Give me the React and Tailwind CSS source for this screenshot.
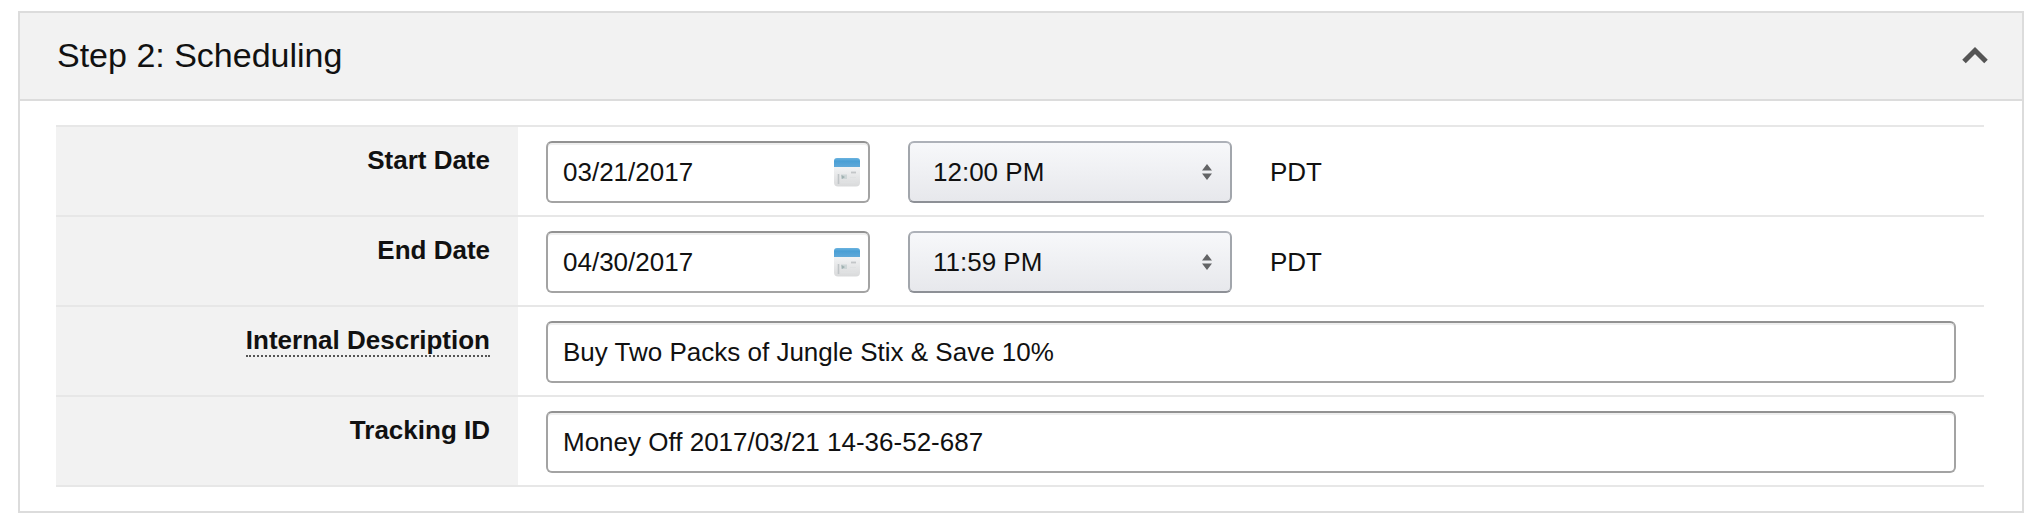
import { useState } from "react";

const TIMES = ["12:00 AM", "6:00 AM", "12:00 PM", "6:00 PM", "11:59 PM"];

const FIELD =
  "block h-[62px] w-full rounded-[6px] border-2 border-[#a3a3a3] border-t-[#929292] bg-white px-[15px] text-[26px] text-[#111] shadow-[inset_0_2px_0_#efefef] outline-none focus:border-[#e77600]";

function CalendarIcon() {
  return (
    <svg viewBox="0 0 26 29" className="h-[29px] w-[26px]" aria-hidden="true">
      <defs>
        <linearGradient id="calHead" x1="0" y1="0" x2="0" y2="1">
          <stop offset="0" stopColor="#6bb3df" />
          <stop offset="0.35" stopColor="#4a9fd5" />
          <stop offset="1" stopColor="#5fa9d9" />
        </linearGradient>
        <linearGradient id="calPage" x1="0" y1="0" x2="0" y2="1">
          <stop offset="0" stopColor="#f3f4f5" />
          <stop offset="1" stopColor="#d9dadb" />
        </linearGradient>
      </defs>
      <path d="M0 8H26V24.5a4 4 0 0 1-4 4H4a4 4 0 0 1-4-4Z" fill="url(#calPage)" />
      <path d="M0 3a3 3 0 0 1 3-3H23a3 3 0 0 1 3 3V9H0Z" fill="url(#calHead)" />
      <path d="M4.5 16V26" stroke="#bfc4c6" strokeWidth="1.6" />
      <path d="M7 16.5H13V21H7Z" fill="#cdd5d6" />
      <path d="M7.5 17L11 19L8 21Z" fill="#9fb0b0" />
      <path d="M17 14.5H22" stroke="#c3c6c8" strokeWidth="1.8" />
      <path d="M7 24.5H21M16 19.5H22" stroke="#dfe1e2" strokeWidth="1.2" />
    </svg>
  );
}

function Row({ id, label, hint, children }) {
  return (
    <div className="flex border-b-2 border-[#e7e7e7]">
      <div className="w-[462px] shrink-0 bg-[#f2f2f2] pt-3.5 pr-7 text-right">
        <label htmlFor={id} className="text-[26px] leading-[38px] font-bold">
          {hint ? (
            <span className="border-b-2 border-dotted border-[#555]">{label}</span>
          ) : (
            label
          )}
        </label>
      </div>
      <div className="flex min-w-0 grow items-center gap-[38px] px-7 pt-3.5 pb-3">{children}</div>
    </div>
  );
}

function DateTime({ id, name, date, time }) {
  return (
    <>
      <div className="relative w-[324px]">
        <input id={id} type="text" defaultValue={date} className={FIELD} />
        <button
          type="button"
          aria-label={`Choose ${name}`}
          className="absolute inset-y-0 right-2.5 flex items-center"
        >
          <CalendarIcon />
        </button>
      </div>
      <div className="relative w-[324px]">
        <select
          aria-label={`${name} time`}
          defaultValue={time}
          className="block h-[62px] w-full appearance-none rounded-[6px] border-2 border-[#a2a6ac] border-t-[#adb1b8] border-b-[#8d9096] bg-linear-to-b from-[#f7f8fa] to-[#e7e8ec] px-[23px] text-[26px] text-[#111] outline-none"
        >
          {TIMES.map((t) => (
            <option key={t}>{t}</option>
          ))}
        </select>
        <svg
          viewBox="0 0 10 16"
          className="pointer-events-none absolute top-[23px] right-5 h-4 w-2.5"
          aria-hidden="true"
        >
          <path d="M0 6.5L5 0L10 6.5ZM0 9.5H10L5 16Z" fill="#636466" />
        </svg>
      </div>
      <span className="text-[26px]">PDT</span>
    </>
  );
}

export default function App() {
  const [open, setOpen] = useState(true);
  return (
    <main className="bg-white pt-[11px] pr-3.5 pb-4 pl-[18px] font-['Liberation_Sans',Arial,sans-serif] text-[#111]">
      <section className="border-2 border-[#dcdcdc]">
        <header className="flex h-[88px] items-center justify-between border-b-2 border-[#dcdcdc] bg-[#f2f2f2] pr-[33px] pb-0.5 pl-[37px]">
          <h2 className="text-[34px]">Step 2: Scheduling</h2>
          <button
            type="button"
            aria-label="Toggle scheduling"
            aria-expanded={open}
            onClick={() => setOpen(!open)}
          >
            <svg viewBox="0 0 28 20" className="h-5 w-7" fill="none" aria-hidden="true">
              <path d="M3 16.5L14 5.5L25 16.5" stroke="#555" strokeWidth="5" />
            </svg>
          </button>
        </header>
        {open && (
          <form className="py-6 pr-[38px] pl-9">
            <div className="border-t-2 border-[#e7e7e7]">
              <Row id="start" label="Start Date">
                <DateTime id="start" name="Start date" date="03/21/2017" time="12:00 PM" />
              </Row>
              <Row id="end" label="End Date">
                <DateTime id="end" name="End date" date="04/30/2017" time="11:59 PM" />
              </Row>
              <Row id="description" label="Internal Description" hint>
                <input
                  id="description"
                  type="text"
                  defaultValue="Buy Two Packs of Jungle Stix &amp; Save 10%"
                  className={FIELD}
                />
              </Row>
              <Row id="tracking" label="Tracking ID">
                <input
                  id="tracking"
                  type="text"
                  defaultValue="Money Off 2017/03/21 14-36-52-687"
                  className={FIELD}
                />
              </Row>
            </div>
          </form>
        )}
      </section>
    </main>
  );
}
